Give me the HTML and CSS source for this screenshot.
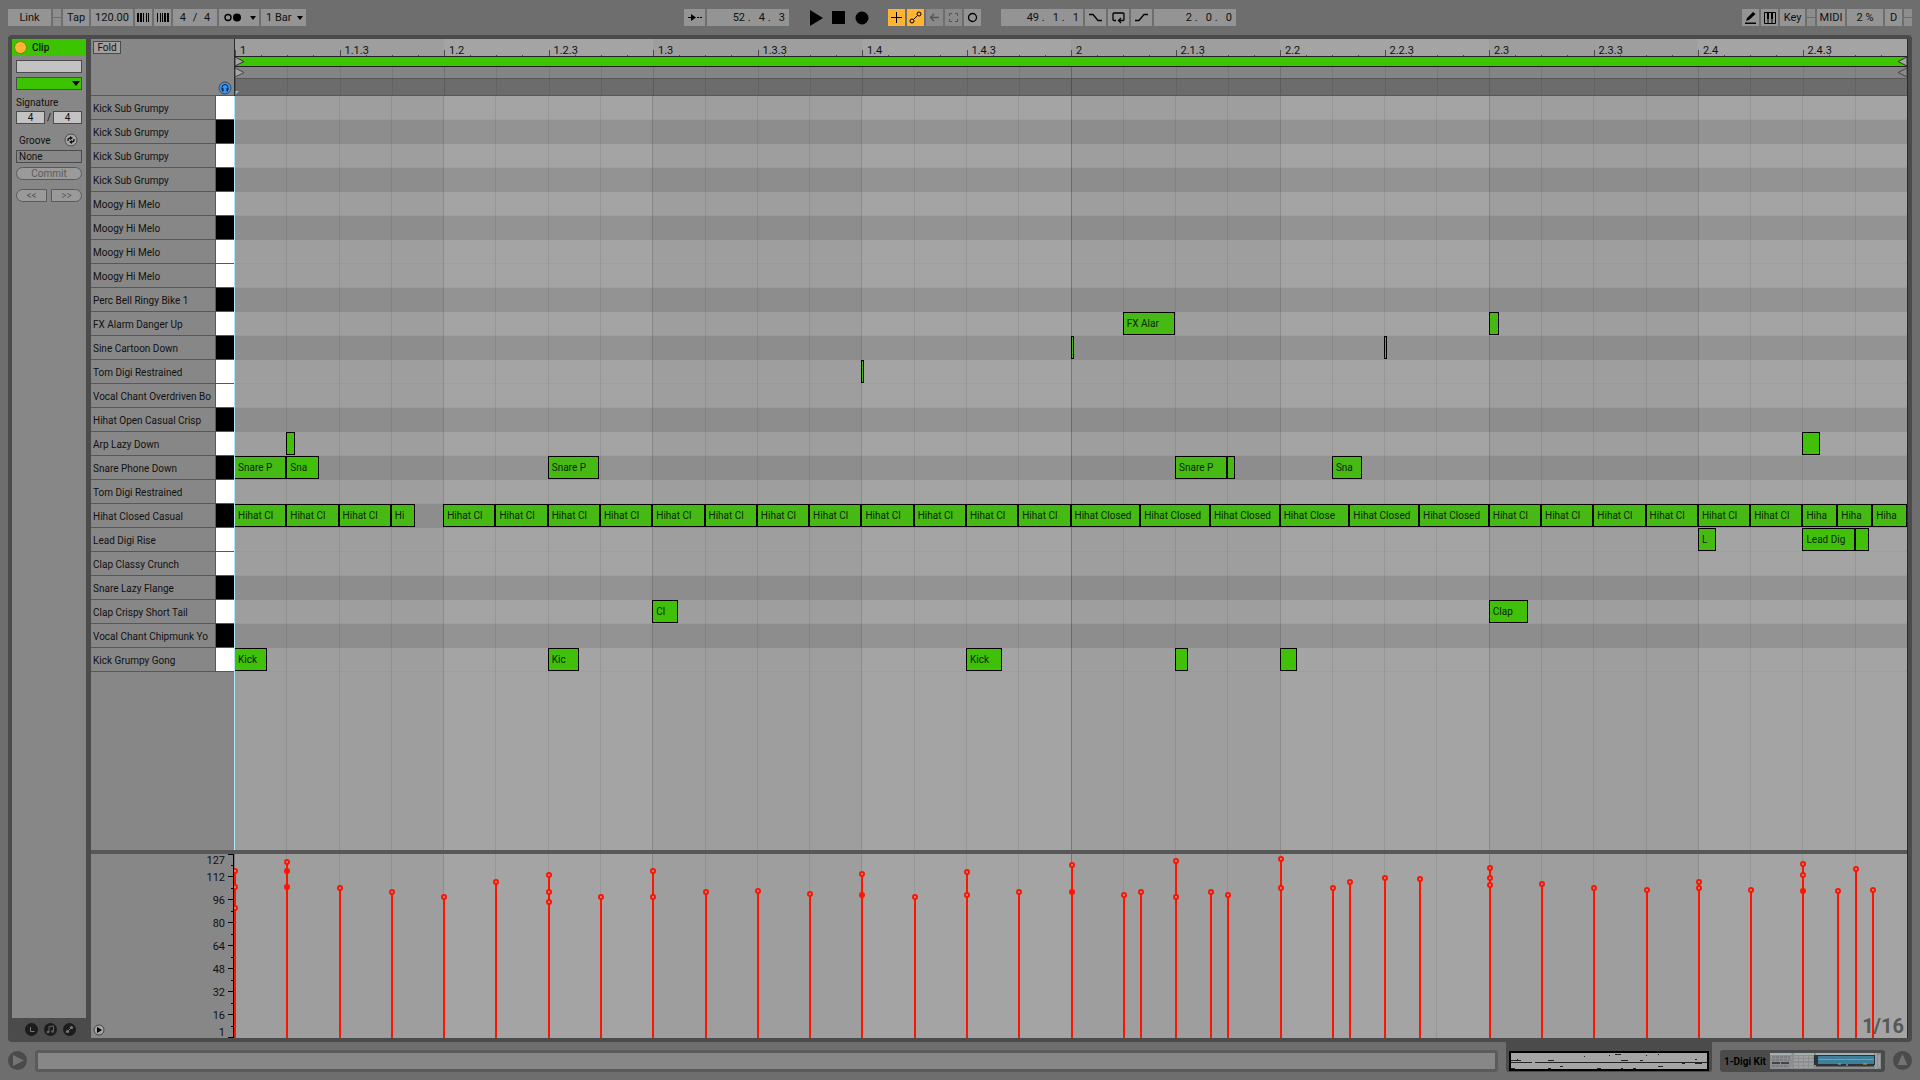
FILE: index.html
```
<!DOCTYPE html>
<html lang="en">

<head>
    <meta charset="UTF-8">
    <meta name="viewport" content="width=device-width, initial-scale=1.0">
    <title>Clip View</title>

    <link rel="stylesheet" href="styles.css">
</head>

<body>

    <!-- Control bar -->
    <header class="toolbar">
        <div class="group">
            <button class="btn w43">Link</button>
            <span class="nub"></span>
            <button class="btn w26">Tap</button>
            <input class="btn w42" aria-label="Tempo" value="120.00">
            <button class="btn w17" aria-label="Nudge down">
                <svg width="13" height="9"><path d="M0 0h2v9H0zM3 0h2v9H3zM6 0h1v9H6zM9 0h1v9H9zM11 0h1v9h-1z" /></svg>
            </button>
            <button class="btn w17" aria-label="Nudge up">
                <svg width="13" height="9"><path d="M1 0h1v9H1zM4 0h1v9H4zM6 0h1v9H6zM8 0h2v9H8zM11 0h2v9h-2z" /></svg>
            </button>
            <button class="btn w44 spaced">4 / 4</button>
            <button class="btn w40 drop" aria-label="Metronome">
                <svg width="18" height="9"><circle cx="4" cy="4.5" r="3" fill="none" stroke="#000" stroke-width="1.4" /><circle cx="13" cy="4.5" r="4" /></svg>
            </button>
            <button class="btn w45 drop">1 Bar</button>
        </div>

        <div class="group">
            <button class="btn w21" aria-label="Follow">
                <svg width="15" height="9"><path d="M1 4h5v1H1zM4 1l5 3.5L4 8zM10 4h2v1h-2zM13 4h2v1h-2z" /></svg>
            </button>
            <input class="btn w82 pos" aria-label="Arrangement position" value="52 .   4 .   3">
            <div class="transport">
                <button class="plain" aria-label="Play"><svg width="14" height="16"><path d="M1 0l13 8L1 16z" /></svg></button>
                <button class="plain" aria-label="Stop"><svg width="14" height="14"><path d="M0 0h13v13H0z" /></svg></button>
                <button class="plain" aria-label="Record"><svg width="14" height="14"><circle cx="7" cy="7" r="6.5" /></svg></button>
            </div>
            <button class="btn w17 on" aria-label="Overdub">
                <svg width="11" height="11"><path d="M5 0h1v5h5v1H6v5H5V6H0V5h5z" /></svg>
            </button>
            <button class="btn w17 on" aria-label="Automation arm">
                <svg width="13" height="13" fill="none" stroke="#000"><circle cx="3" cy="10" r="2" /><circle cx="10" cy="3" r="2" /><path d="M4.5 8.5l4-4" /></svg>
            </button>
            <button class="btn w17 dim" aria-label="Re-enable automation">
                <svg width="11" height="9"><path d="M1 4.5h9M5 1L1.500 4.5 5 8" fill="none" stroke="#555" stroke-width="1.4" /></svg>
            </button>
            <button class="btn w17 dim" aria-label="Capture">
                <svg width="11" height="11" fill="none" stroke="#555"><path d="M1.500 4V1.500H4M7 1.500h2.500V4M9.500 7v2.500H7M4 9.500H1.500V7" /></svg>
            </button>
            <button class="btn w17" aria-label="Session record">
                <svg width="11" height="11"><circle cx="5.5" cy="5.5" r="4" fill="none" stroke="#000" stroke-width="1.3" /></svg>
            </button>
            <input class="btn w82 pos loopstart" aria-label="Loop start" value="49 .   1 .   1">
            <button class="btn w21" aria-label="Punch in">
                <svg width="15" height="9" fill="none" stroke="#000" stroke-width="1.3"><path d="M1 1.500h4l5 6h4" /></svg>
            </button>
            <button class="btn w21" aria-label="Loop">
                <svg width="15" height="12" fill="none" stroke="#000" stroke-width="1.3"><path d="M5 8.500H3q-1 0-1-1V2q0-1 1-1h9q1 0 1 1v5.500q0 1-1 1H8M10 6L7.500 8.500 10 11" /></svg>
            </button>
            <button class="btn w21" aria-label="Punch out">
                <svg width="15" height="9" fill="none" stroke="#000" stroke-width="1.3"><path d="M1 7.500h4l5-6h4" /></svg>
            </button>
            <input class="btn w82 pos" aria-label="Loop length" value="2 .   0 .   0">
        </div>

        <div class="group right">
            <button class="btn w17" aria-label="Draw mode">
                <svg width="11" height="12"><path d="M0 10.500h11V12H0zM1 9l1-3 6-6 2.500 2L4 8z" /></svg>
            </button>
            <button class="btn w17" aria-label="Computer keyboard">
                <svg width="12" height="12"><path d="M.5.5h11v11H.5zM4 6v5.500M8 6v5.500" fill="none" stroke="#000" /><path d="M3 0h2v7H3zM7 0h2v7H7z" /></svg>
            </button>
            <button class="btn w25">Key</button>
            <span class="nub"></span>
            <button class="btn w28">MIDI</button>
            <button class="btn w36">2 %</button>
            <button class="btn w17">D</button>
            <span class="nub"></span>
        </div>
    </header>

    <main class="frame">

        <!-- Clip box -->
        <aside class="side">
            <section class="clip">
                <h2 class="clipTitle"><span class="led"></span>Clip</h2>
                <div class="clipBody">
                    <input class="field" aria-label="Clip name">
                    <div class="colorPick"><select class="field green" aria-label="Clip color"><option></option></select></div>
                    <p class="label">Signature</p>
                    <div class="pair signature">
                        <input class="field" aria-label="Numerator" value="4">
                        <span>/</span>
                        <input class="field" aria-label="Denominator" value="4">
                    </div>
                    <div class="grooveRow">
                        <label for="groove">Groove</label>
                        <button class="plain" aria-label="Hot swap groove">
                            <svg width="14" height="14"><circle cx="7" cy="7" r="6" fill="#a5a5a5" stroke="#4b4b4b" /><path d="M4 8V7q0-2 3-2M10 6v1q0 2-3 2" fill="none" stroke="#111" stroke-width="1.3" /><path d="M6 3l3 2-3 2zM8 7v4L5 9z" fill="#111" /></svg>
                        </button>
                    </div>
                    <select class="field none" id="groove"><option>None</option></select>
                    <button class="pill">Commit</button>
                    <div class="pair nudge">
                        <button class="pill left">&lt;&lt;</button>
                        <button class="pill rightPill">&gt;&gt;</button>
                    </div>
                </div>
            </section>
            <div class="toggles">
                <button class="plain" aria-label="Launch box"><svg width="13" height="13"><circle cx="6.5" cy="6.5" r="6.5" fill="#1c1c1c" /><path d="M5.500 4v4.500h4" fill="none" stroke="#777" /></svg></button>
                <button class="plain" aria-label="Notes box"><svg width="13" height="13"><circle cx="6.5" cy="6.5" r="6.5" fill="#1c1c1c" /><path d="M5 9V3.500L9.500 3v5" fill="none" stroke="#666" /><circle cx="4" cy="9" r="1.3" fill="#666" /><circle cx="8.5" cy="8.5" r="1.3" fill="#666" /></svg></button>
                <button class="plain" aria-label="Envelopes box"><svg width="13" height="13"><circle cx="6.5" cy="6.5" r="6.5" fill="#1c1c1c" /><path d="M4 9l5-5" stroke="#777" /><circle cx="4.5" cy="8.5" r="1.6" fill="#777" /><circle cx="8.5" cy="4.5" r="1.6" fill="#777" /></svg></button>
            </div>
        </aside>

        <!-- MIDI editor -->
        <section class="editor">
            <div class="head">
                <div class="headLeft">
                    <button class="fold">Fold</button>
                    <button class="plain preview" aria-label="Preview">
                        <svg width="14" height="14"><circle cx="7" cy="7" r="6" fill="#3c96f0" stroke="#3c4a58" /><path d="M4 9V6.500a3 3 0 0 1 6 0V9" fill="none" stroke="#10243c" /><path d="M4 7h1.500v3.500H4zM8.500 7H10v3.500H8.500z" fill="#10243c" /></svg>
                    </button>
                </div>
                <div class="headRight">
                    <div class="ruler shaded"><div class="marks" id="marks"></div></div>
                    <div class="loop">
                        <svg width="10" height="11"><path d="M0 1l9 4.500L0 10z" fill="#a5a5a5" stroke="#333" /></svg>
                        <svg width="10" height="11"><path d="M10 1L1 5.500 10 10z" fill="#a5a5a5" stroke="#333" /></svg>
                    </div>
                    <div class="region shaded">
                        <svg width="10" height="11"><path d="M0 1l9 4.500L0 10z" fill="#a5a5a5" stroke="#444" /></svg>
                        <svg width="10" height="11"><path d="M10 1L1 5.500 10 10z" fill="#8a8a8a" stroke="#444" /></svg>
                    </div>
                    <div class="scrub shaded"><svg width="4" height="4"><path d="M0 0h4L0 4z" fill="#78c8f0" /></svg></div>
                </div>
            </div>

            <div class="roll">
                <div class="names" id="names"></div>
                <div class="lanes shaded" id="lanes"></div>
            </div>

            <div class="velocity">
                <div class="axis" id="axis">
                    <button class="plain unfold" aria-label="Show velocity"><svg width="12" height="12"><circle cx="6" cy="6" r="5" fill="#a5a5a5" stroke="#444" /><path d="M4 3l5 3-5 3z" /></svg></button>
                </div>
                <div class="stems shaded" id="stems">
                    <span class="gridSize">1/16</span>
                </div>
            </div>
        </section>
    </main>

    <!-- Status bar -->
    <footer class="status">
        <button class="plain" aria-label="Show info"><svg width="19" height="19"><circle cx="9.5" cy="9.5" r="9.5" fill="#4b4b4b" /><path d="M5 4l11 5.500L5 15z" fill="#747474" /></svg></button>
        <div class="message"></div>
        <div class="clipTab"><div class="overview" id="overview"></div></div>
        <button class="deviceTab">
            1-Digi Kit
            <svg width="111" height="16">
                <rect width="111" height="16" fill="#8b8f90" />
                <path d="M0 0h21v2H0zM24 0h20v2H24zM46 0h58v2H46z" fill="#a4b0b4" />
                <path d="M2 4h18M2 7h18M2 13h17" stroke="#6d6d6d" stroke-dasharray="3 1" />
                <path d="M2 10h18" stroke="#444" stroke-width="2" stroke-dasharray="8 1" />
                <path d="M24 4h19M24 7h19M24 11h19M24 14h19" stroke="#b4b4b4" stroke-dasharray="4 1" />
                <rect x="44" y="2" width="61" height="10" fill="#2c3337" />
                <rect x="48" y="3" width="56" height="8" fill="#3d7f9b" />
                <path d="M48 6.500h56" stroke="#78a08c" />
                <path d="M46 12.500h58" stroke="#333" stroke-width="2" />
                <path d="M68 11h3M76 12h2" stroke="#6cc6e8" />
                <path d="M93 11h4M1 4h1M21 1h1M21 5h1M21 14h1" stroke="#d9a33c" />
                <path d="M106 0v16M109 2v12" stroke="#aab4b8" />
            </svg>
        </button>
        <button class="plain" aria-label="Show devices"><svg width="19" height="19"><circle cx="9.5" cy="9.5" r="9.5" fill="#4b4b4b" /><path d="M9.500 3l5 11h-10z" fill="#747474" /></svg></button>
    </footer>

    <script src="script.js"></script>
</body>

</html>
```

FILE: styles.css
```
* {
    box-sizing: border-box;
}

body {
    margin: 0;
    height: 100vh;
    display: flex;
    flex-direction: column;
    background-color: #6e6e6e;
    font-family: Roboto, "Liberation Sans", sans-serif;
    font-size: 10px;
    color: #111;
    overflow: hidden;
}

button,
input,
select {
    margin: 0;
    padding: 0;
    border: 0;
    border-radius: 0;
    font: inherit;
    color: inherit;
    appearance: none;
}

svg {
    display: block;
    flex: none;
}

.plain {
    background: none;
}

/* control bar */
.toolbar {
    display: grid;
    grid-template-columns: 1fr auto 1fr;
    padding: 9px 8px;
    font-size: 11px;
}

.group {
    display: flex;
    gap: 2px;
}

.right {
    justify-content: flex-end;
}

.btn {
    height: 17px;
    background-color: #949494;
    display: flex;
    align-items: center;
    justify-content: center;
    text-align: center;
    white-space: pre;
}

.w17 { width: 17px; }
.w21 { width: 21px; }
.w25 { width: 25px; }
.w26 { width: 26px; }
.w28 { width: 28px; }
.w36 { width: 36px; }
.w40 { width: 40px; }
.w42 { width: 42px; }
.w43 { width: 43px; }
.w44 { width: 44px; }
.w45 { width: 45px; }
.w82 { width: 82px; }

.pos {
    text-align: right;
    padding-right: 4px;
}

.on {
    background-color: #ffb532;
}

.dim {
    background-color: #8a8a8a;
}

.spaced {
    gap: 6px;
    word-spacing: 4px;
}

.drop {
    justify-content: space-between;
    padding: 0 3px 0 5px;
}

.drop::after {
    content: "";
    border: 3px solid transparent;
    border-top: 4px solid #000;
    border-bottom: 0;
}

.nub {
    width: 8px;
    height: 17px;
    background: linear-gradient(#6e6e6e, #6e6e6e) 0 8px / 100% 1px no-repeat #8e8e8e;
}

.transport {
    width: 95px;
    display: flex;
    align-items: center;
    justify-content: center;
    gap: 9px;
}

.loopstart {
    margin-left: 18px;
}

/* main frame */
.frame {
    flex: 1;
    min-height: 0;
    margin: 0 8px;
    padding: 4px;
    display: flex;
    gap: 5px;
    background-color: #4b4b4b;
    border-radius: 4px;
}

.side {
    width: 74px;
    display: flex;
    flex-direction: column;
}

.clip {
    flex: 1;
    background-color: #878787;
}

.clipTitle {
    margin: 0;
    height: 17px;
    padding-left: 2px;
    display: flex;
    align-items: center;
    gap: 5px;
    background-color: #3cc400;
    font-size: 10px;
    font-weight: 500;
}

.led {
    width: 13px;
    height: 13px;
    border: 1px solid #7a7a30;
    border-radius: 50%;
    background-color: #ffb532;
}

.clipBody {
    padding: 4px;
    display: flex;
    flex-direction: column;
}

.field {
    width: 100%;
    height: 13px;
    border: 1px solid #4b4b4b;
    background-color: #c3c3c3;
}

.colorPick {
    position: relative;
    margin: 4px 0 7px;
    height: 13px;
    display: flex;
}

.colorPick::after {
    content: "";
    position: absolute;
    right: 2px;
    top: 4px;
    border: 4px solid transparent;
    border-top: 5px solid #000;
    border-bottom: 0;
}

.green {
    background-color: #3cc400;
}

.label {
    margin: 0;
    line-height: 12px;
    padding-bottom: 2px;
}

.pair {
    display: flex;
    justify-content: space-between;
    align-items: center;
    gap: 4px;
}

.signature {
    gap: 0;
}

.signature .field {
    width: 29px;
    text-align: center;
}

.grooveRow {
    padding: 9px 4px 3px 3px;
    display: flex;
    justify-content: space-between;
    align-items: center;
}

.none {
    background-color: #878787;
    padding-left: 2px;
    line-height: 11px;
}

.pill {
    height: 13px;
    margin-top: 4px;
    border: 1px solid #5a5a5a;
    border-radius: 7px;
    background-color: #9a9a9a;
    color: #5a5a5a;
    line-height: 10px;
}

.nudge {
    margin-top: 5px;
}

.nudge .pill {
    flex: 1;
}

.left {
    border-radius: 7px 0 0 7px;
}

.rightPill {
    border-radius: 0 7px 7px 0;
}

.toggles {
    height: 20px;
    padding: 0 0 2px 2px;
    display: flex;
    justify-content: center;
    align-items: flex-end;
    gap: 6px;
}

/* editor */
.editor {
    flex: 1;
    min-width: 0;
    display: flex;
    flex-direction: column;
    background-color: #878787;
    border-right: 1px solid #2a2a2a;
}

.head,
.roll,
.velocity {
    display: grid;
    grid-template-columns: 143px 1fr;
}

.headLeft {
    display: flex;
    justify-content: space-between;
    padding: 2px 2px 0;
    border-bottom: 1px solid #585858;
}

.fold {
    height: 13px;
    width: 28px;
    border: 1px solid #4b4b4b;
    background-color: #a0a0a0;
    line-height: 10px;
}

.preview {
    align-self: flex-end;
}

.headRight {
    border-left: 1px solid #2a2a2a;
}

.shaded {
    position: relative;
}

/* sixteenth columns, shared by every strip of the editor */
.columns {
    position: absolute;
    inset: 0;
    display: grid;
    grid-template-columns: repeat(32, 1fr);
}

.columns i {
    border-left: 1px solid rgba(0, 0, 0, 0.08);
}

.columns i:nth-child(8n + 5),
.columns i:nth-child(8n + 6),
.columns i:nth-child(8n + 7),
.columns i:nth-child(8n + 8) {
    background-color: rgba(255, 255, 255, 0.07);
}

.columns i:nth-child(4n + 1) {
    border-left-color: rgba(0, 0, 0, 0.14);
}

.columns i:nth-child(16n + 1) {
    border-left-color: rgba(0, 0, 0, 0.25);
}

.ruler {
    height: 17px;
    background-color: #9e9e9e;
}

.ruler .columns i {
    border-left-color: transparent;
}

.marks {
    position: relative;
    height: 17px;
    display: grid;
    grid-template-columns: repeat(16, 1fr);
}

.mark {
    display: flex;
    flex-direction: column;
    justify-content: flex-end;
}

.mark span {
    padding-left: 4px;
    border-left: 1px solid #4b4b4b;
    height: 5px;
    line-height: 2px;
    font-size: 11px;
}

.ticks {
    height: 1px;
    display: grid;
    grid-template-columns: repeat(4, 1fr);
}

.ticks i {
    border-left: 1px solid #4b4b4b;
}

.loop,
.region {
    display: flex;
    justify-content: space-between;
    align-items: center;
}

.loop {
    height: 11px;
    border: solid #222;
    border-width: 1px 0;
    background-color: #3cc400;
}

.region {
    height: 12px;
    background-color: #848484;
    border-bottom: 1px solid #585858;
}

.region svg {
    position: relative;
}

.region .columns i,
.scrub .columns i {
    background: none;
}

.scrub {
    height: 17px;
    padding-top: 12px;
    background-color: #6c6c6c;
    border-bottom: 1px solid #585858;
}

.roll {
    flex: 1;
    min-height: 0;
}

.row {
    height: 24px;
    display: flex;
    border-bottom: 1px solid #585858;
}

.row span {
    flex: 1;
    padding-left: 2px;
    line-height: 26px;
    white-space: nowrap;
    overflow: hidden;
    border-right: 1px solid #585858;
}

.row i {
    width: 18px;
    background-color: #fff;
}

.row.black i {
    background-color: #000;
}

.lanes {
    background-color: #9e9e9e;
    overflow: hidden;
}

/* insert marker */
.lanes::before {
    content: "";
    position: absolute;
    inset: 0 auto 0 0;
    width: 1px;
    background-color: #b4e6fa;
    z-index: 1;
}

.lane {
    position: relative;
    height: 24px;
    border-bottom: 1px solid rgba(0, 0, 0, 0.03);
}

.lane.black {
    background-color: rgba(0, 0, 0, 0.1);
    border-bottom: 0;
}

.note {
    position: absolute;
    top: 0;
    height: 23px;
    min-width: 3px;
    border: 1px solid #000;
    background-color: #47b914;
    color: #0a2800;
    line-height: 22px;
    white-space: nowrap;
    overflow: hidden;
    text-indent: 3px;
}

.note.loud {
    background-color: #40c008;
}

/* velocity lane */
.velocity {
    height: 188px;
    border-top: 4px solid #585858;
}

.axis {
    position: relative;
    border-right: 1px solid #000;
}

.unfold {
    position: absolute;
    left: 2px;
    bottom: 2px;
}

.axis .tick {
    position: absolute;
    right: 0;
    width: 2px;
    border-top: 1px solid #000;
}

.axis .tick.major {
    width: 5px;
}

.axis .num {
    position: absolute;
    right: 8px;
    height: 12px;
    margin-bottom: -7px;
    line-height: 12px;
    font-size: 11px;
}

.stems {
    background-color: #9e9e9e;
    overflow: hidden;
}

.gridSize {
    position: absolute;
    right: 3px;
    bottom: 2px;
    font-size: 20px;
    line-height: 20px;
    font-weight: bold;
    color: #585858;
}

.stem {
    position: absolute;
    bottom: 0;
    width: 2px;
    background-color: #ff1400;
}

.dot {
    position: absolute;
    width: 6px;
    height: 6px;
    margin: 0 0 -4px -2px;
    border: 2px solid #ff1400;
    border-radius: 50%;
    background-color: #a5a5a5;
}

.dot.full {
    background-color: #ff1400;
}

/* status bar */
.status {
    height: 38px;
    padding: 8px 8px 0;
    display: flex;
    align-items: flex-start;
    gap: 8px;
}

.status .plain {
    padding-top: 1px;
}

.message {
    flex: 1;
    height: 22px;
    border: 3px solid #5b5b5b;
    border-radius: 3px;
    background-color: #878787;
}

.clipTab {
    margin-top: -8px;
    padding: 9px 3px 1px;
    background-color: #4b4b4b;
    border-radius: 0 0 3px 3px;
}

.overview {
    position: relative;
    width: 200px;
    height: 20px;
    border: 2px solid #000;
    background-color: #a5a5a5;
}

.overview i {
    position: absolute;
    height: 1px;
    min-width: 1px;
    background-color: #222;
}

.deviceTab {
    height: 22px;
    padding: 0 4px;
    display: flex;
    align-items: center;
    gap: 4px;
    border-radius: 3px;
    background-color: #4b4b4b;
    color: #000;
    font-weight: bold;
}
```

FILE: script.js
```
const STEPS = 32

// name, is black key, notes as [start step, length, text, loud]
const rows = [
    ["Kick Sub Grumpy", 0, []],
    ["Kick Sub Grumpy", 1, []],
    ["Kick Sub Grumpy", 0, []],
    ["Kick Sub Grumpy", 1, []],
    ["Moogy Hi Melo", 0, []],
    ["Moogy Hi Melo", 1, []],
    ["Moogy Hi Melo", 0, []],
    ["Moogy Hi Melo", 0, []],
    ["Perc Bell Ringy Bike 1", 1, []],
    ["FX Alarm Danger Up", 0, [[17, 1, "FX Alar"], [24, 0.19, ""]]],
    ["Sine Cartoon Down", 1, [[16, 0.05, ""], [22, 0.05, ""]]],
    ["Tom Digi Restrained", 0, [[12, 0.05, ""]]],
    ["Vocal Chant Overdriven Bo", 0, []],
    ["Hihat Open Casual Crisp", 1, []],
    ["Arp Lazy Down", 0, [[1, 0.17, "", 1], [30, 0.33, "", 1]]],
    ["Snare Phone Down", 1, [[0, 1, "Snare P"], [1, 0.63, "Sna", 1], [6, 0.98, "Snare P"], [18, 1, "Snare P"], [19, 0.15, ""], [21, 0.57, "Sna"]]],
    ["Tom Digi Restrained", 0, []],
    ["Hihat Closed Casual", 1, [[0, 1, "Hihat Cl"], [1, 1, "Hihat Cl"], [2, 1, "Hihat Cl"], [3, 0.47, "Hi"]]],
    ["Lead Digi Rise", 0, [[28, 0.34, "L"], [30, 1, "Lead Dig", 1], [31, 0.27, "", 1]]],
    ["Clap Classy Crunch", 0, []],
    ["Snare Lazy Flange", 1, []],
    ["Clap Crispy Short Tail", 0, [[8, 0.49, "Cl", 1], [24, 0.76, "Clap", 1]]],
    ["Vocal Chant Chipmunk Yo", 1, []],
    ["Kick Grumpy Gong", 0, [[0, 0.63, "Kick", 1], [6, 0.59, "Kic", 1], [14, 0.69, "Kick", 1], [18, 0.25, "", 1], [20, 0.34, "", 1]]]
]

// the hihat runs almost through the whole clip
const hihat = rows[17][2]
for (let s = 4; s < 16; s++) hihat.push([s, 1, "Hihat Cl"])
for (let k = 0; k < 6; k++) hihat.push([16 + k * 4 / 3, 4 / 3, k == 3 ? "Hihat Close" : "Hihat Closed"])
for (let s = 24; s < 30; s++) hihat.push([s, 1, "Hihat Cl"])
for (let k = 0; k < 3; k++) hihat.push([30 + k * 2 / 3, 2 / 3, "Hiha"])

// step, velocities (top first), how many of the lowest are stacked
const velocities = [
    [0, [117, 106, 91], 0], [1, [123, 117, 106], 2], [2, [105], 0], [3, [102], 0],
    [4, [99], 0], [5, [109], 0], [6, [114, 102, 95], 0], [7, [99], 0],
    [8, [117, 99], 0], [9, [102], 0], [10, [103], 0], [11, [101], 0],
    [12, [115, 100], 1], [13, [99], 0], [14, [116, 100], 0], [15, [102], 0],
    [16, [121, 102], 1], [17, [100], 0], [17.33, [102], 0], [18, [124, 99], 0],
    [18.67, [102], 0], [19, [100], 0], [20, [125, 105], 0], [21, [105], 0],
    [21.33, [109], 0], [22, [112], 0], [22.67, [111], 0], [24, [119, 112, 107], 0],
    [25, [108], 0], [26, [105], 0], [27, [104], 0], [28, [109, 105], 0],
    [29, [104], 0], [30, [122, 114, 103], 1], [30.67, [103], 0], [31, [118], 0], [31.33, [104], 0]
]

const pct = (value, total) => (value / total * 100) + "%"

function add(parent, tag, cls, style, text) {
    const el = document.createElement(tag)
    if (cls) el.className = cls
    Object.assign(el.style, style || {})
    if (text) el.textContent = text
    parent.appendChild(el)
    return el
}

document.querySelectorAll(".shaded").forEach(function (strip) {
    const cols = document.createElement("div")
    cols.className = "columns"
    cols.innerHTML = "<i></i>".repeat(STEPS)
    strip.prepend(cols)
})

// ruler
const marks = document.getElementById("marks")
for (let i = 0; i < 16; i++) {
    const bar = Math.floor(i / 8) + 1
    const beat = Math.floor(i % 8 / 2) + 1
    let text = bar + "." + beat
    if (i % 2) text += ".3"
    else if (beat == 1) text = String(bar)
    const mark = add(marks, "div", "mark")
    add(mark, "span", "", {}, text)
    add(mark, "div", "ticks").innerHTML = "<i></i>".repeat(4)
}

// rows and notes
const names = document.getElementById("names")
const lanes = document.getElementById("lanes")
const overview = document.getElementById("overview")
rows.forEach(function ([name, black, notes], index) {
    const row = add(names, "div", black ? "row black" : "row")
    add(row, "span", "", {}, name)
    add(row, "i")
    const lane = add(lanes, "div", black ? "lane black" : "lane")
    notes.forEach(function ([start, length, text, loud]) {
        const place = { left: pct(start, STEPS), width: pct(length, STEPS) }
        add(lane, "div", loud ? "note loud" : "note", place, text)
        place.top = pct(index - 8, 16)
        add(overview, "i", "", place)
    })
})

// velocity lane
const axis = document.getElementById("axis")
for (let v = 0; v <= 128; v += 8) {
    add(axis, "i", v % 16 ? "tick" : "tick major", { bottom: v == 128 ? "calc(100% - 1px)" : pct(v, 128) })
    if (v % 16 == 0 && v > 0 && v < 128) add(axis, "span", "num", { bottom: pct(v, 128) }, v)
}
add(axis, "span", "num", { bottom: pct(124, 128) }, "127")
add(axis, "span", "num", { bottom: pct(4, 128) }, "1")

const stems = document.getElementById("stems")
velocities.forEach(function ([step, values, full]) {
    add(stems, "div", "stem", { left: pct(step, STEPS), height: pct(values[0], 128) })
    values.forEach(function (v, i) {
        const cls = i >= values.length - full ? "dot full" : "dot"
        add(stems, "div", cls, { left: pct(step, STEPS), bottom: pct(v, 128) })
    })
})
```
